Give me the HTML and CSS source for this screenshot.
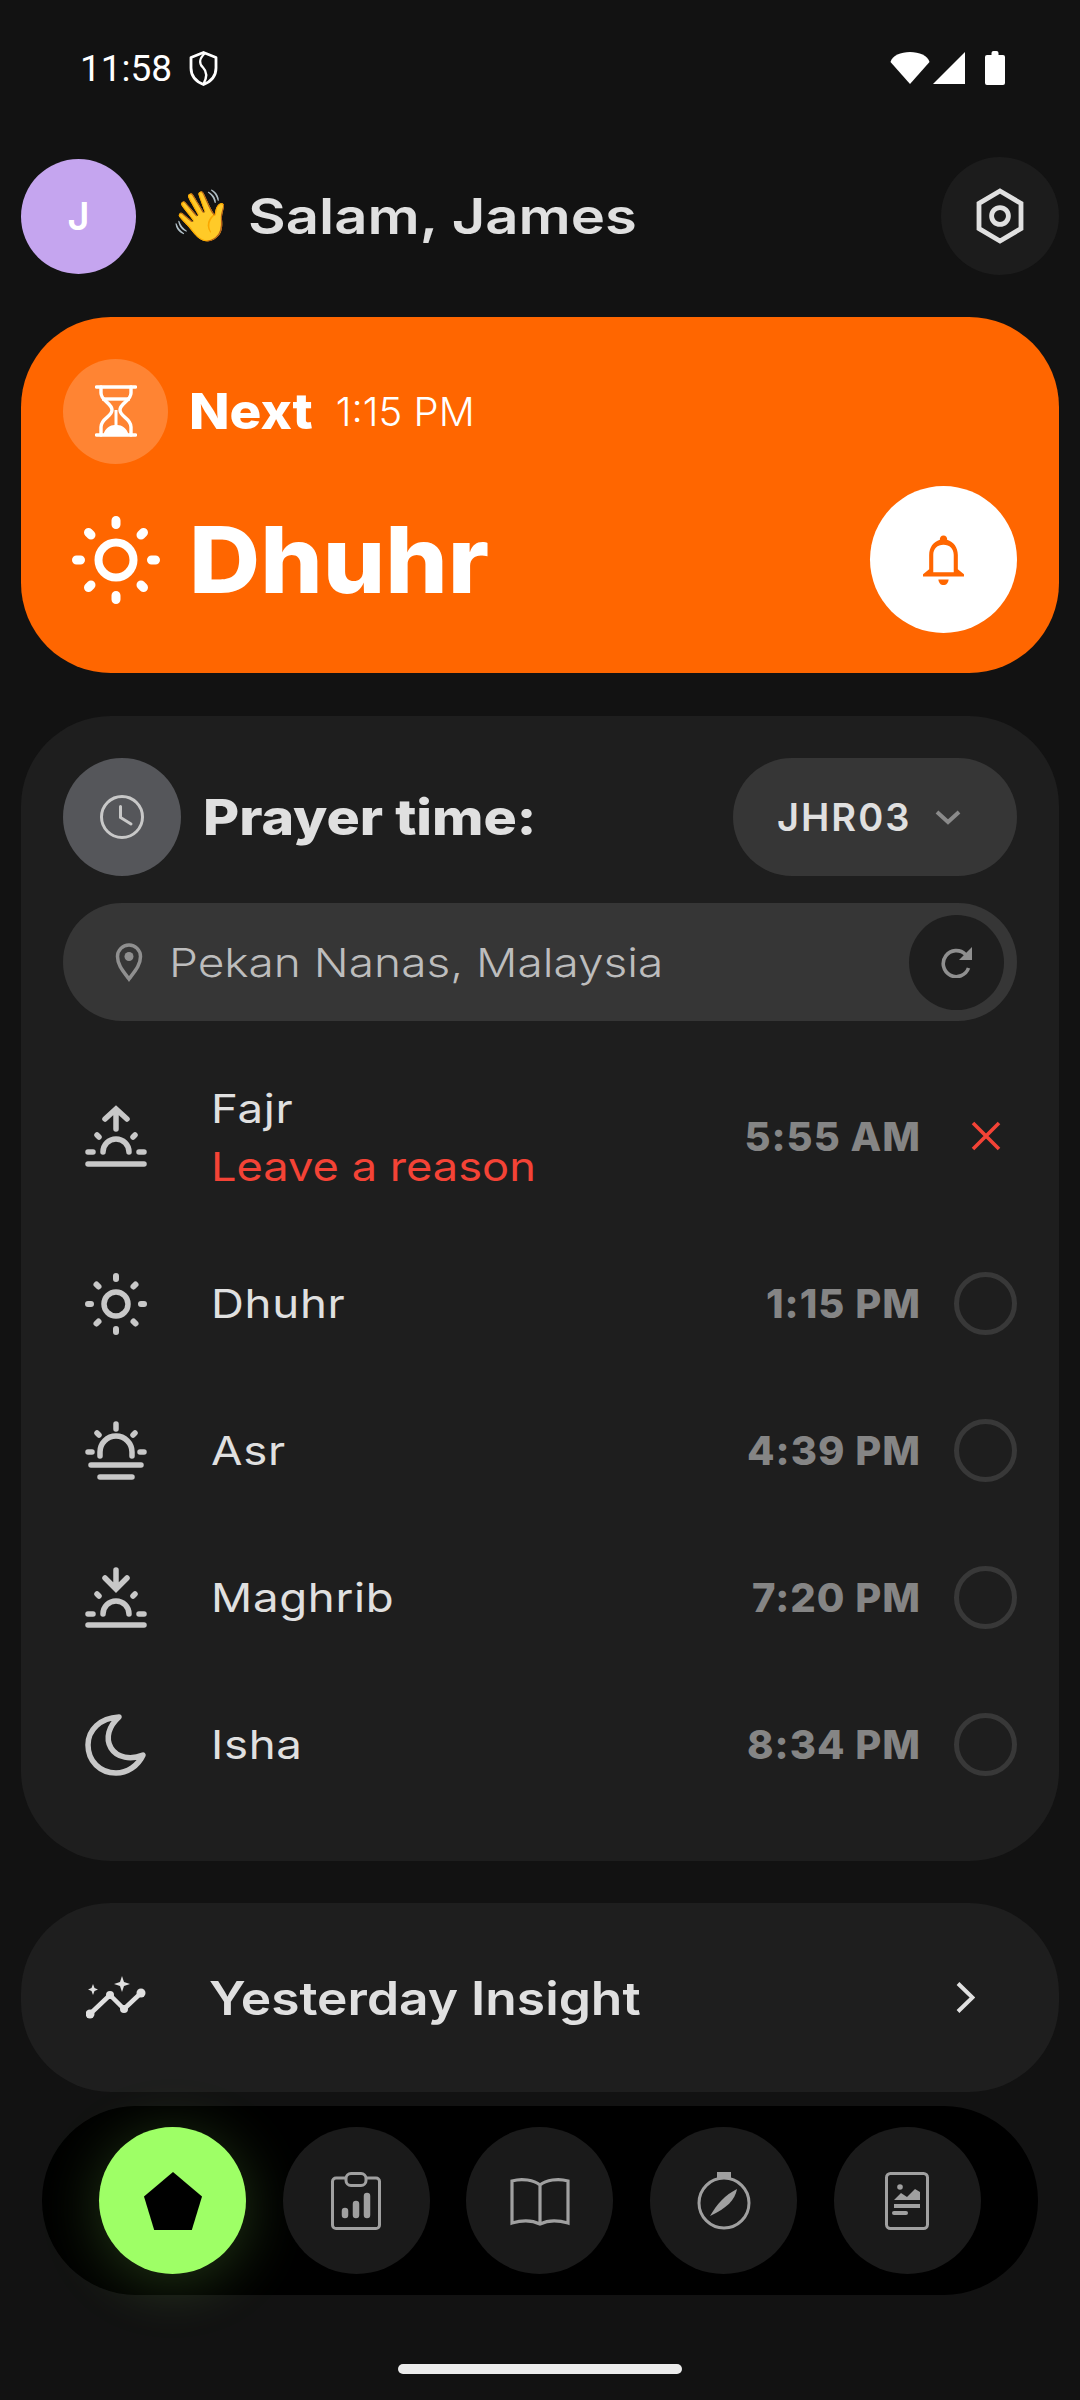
FILE: index.html
```html
<!DOCTYPE html>
<html lang="en">
<head>
<meta charset="utf-8">
<title>Prayer times</title>
<link rel="stylesheet" href="styles.css">
</head>
<body>
<div class="screen">
  <div class="status">
    <div class="status-left">
      <span class="clock">11:58</span>
      <svg class="ic-shield" viewBox="0 0 29 35"><path d="M14.500 1.500 27 6.500V17c0 7.500-5 13.500-12.500 16.500C7 30.500 2 24.500 2 17V6.500Z" fill="none" stroke="#fff" stroke-width="2.800" stroke-linejoin="round"/><path d="M16 2C10 8 9.500 12 14 16.500c4.500 4.500 4 10 .5 16.500" fill="none" stroke="#fff" stroke-width="2.400"/></svg>
    </div>
    <div class="status-right">
      <svg class="ic-wifi" viewBox="0 0 40 32"><path d="M20 32 0.500 10C2 3.500 11 0 20 0s18 3.500 19.500 10Z" fill="#fff"/></svg>
      <svg class="ic-signal" viewBox="0 0 32 32"><path d="M32 0V32H0Z" fill="#fff"/></svg>
      <svg class="ic-batt" viewBox="0 0 20 34"><path d="M6.500 2a2 2 0 0 1 2-2h3a2 2 0 0 1 2 2v2H18a2 2 0 0 1 2 2v26a2 2 0 0 1-2 2H2a2 2 0 0 1-2-2V6a2 2 0 0 1 2-2h4.500Z" fill="#fff"/></svg>
    </div>
  </div>

  <header class="topbar">
    <div class="avatar">J</div>
    <div class="greeting"><span class="wave">👋</span><span class="greet-text">Salam, James</span></div>
    <button class="gear">
      <svg viewBox="0 0 24 28" class="ic-gear"><path d="M12 1.500 22.500 7.700V20.300L12 26.500 1.500 20.300V7.700Z" fill="none" stroke="#e0e0e0" stroke-width="2.400"/><circle cx="12" cy="14" r="4.200" fill="none" stroke="#e0e0e0" stroke-width="2.400"/></svg>
    </button>
  </header>

  <section class="next">
    <div class="next-top">
      <div class="next-badge">
        <svg viewBox="0 0 42 52" class="ic-hour"><g fill="none" stroke="#fff" stroke-width="3.400" stroke-linecap="round"><path d="M1.500 2H40.500M1.500 50H40.500"/><path d="M6 2v6c0 8 11 10 11 17 0 7-11 8-11 17v8M36 2v6c0 8-11 10-11 17 0 7 11 8 11 17v8"/></g><path d="M7 14H35" stroke="#fff" stroke-width="3.400"/><path d="M19.500 25h3v15c4 0 9 3 11 9H8.500c2-6 7-9 11-9Z" fill="#fff"/></svg>
      </div>
      <span class="next-label">Next</span>
      <span class="next-time">1:15 PM</span>
    </div>
    <div class="next-main">
      <svg viewBox="0 0 88 88" class="ic-sun-lg"><g fill="none" stroke="#fff" stroke-linecap="round"><circle cx="44" cy="44" r="17.500" stroke-width="8"/><path stroke-width="9" d="M44 4.500V8.500M44 79.500V83.500M4.500 44H8.500M79.500 44H83.500M16.500 16.500 19 19M69 69 71.500 71.500M16.500 71.500 19 69M69 19 71.500 16.500"/></g></svg>
      <h1 class="next-name">Dhuhr</h1>
      <button class="bell-btn">
        <svg viewBox="0 0 42 50" class="ic-bell"><path d="M21 1a3.500 3.500 0 0 1 3.500 4.200C31 7 35 13 35 20V34l6 5v2H1v-2l6-5V20C7 13 11 7 17.500 5.200A3.500 3.500 0 0 1 21 1Z M21 10c-6 0-10 4-10 10V37H31V20C31 14 27 10 21 10Z" fill="#ff6600" fill-rule="evenodd"/><path d="M16 44H26C25.500 48 23.500 49.500 21 49.500S16.500 48 16 44Z" fill="#ff6600"/></svg>
      </button>
    </div>
  </section>

  <section class="card">
    <div class="card-head">
      <div class="clock-badge">
        <svg viewBox="0 0 44 44" class="ic-clock"><g fill="none" stroke="#c8c8c8" stroke-width="3" stroke-linecap="round"><circle cx="22" cy="22" r="20.500"/><path d="M20.500 11.500V22.500L31 29"/></g></svg>
      </div>
      <h2 class="card-title">Prayer time:</h2>
      <button class="zone">
        <span>JHR03</span>
        <svg viewBox="0 0 26 16" class="ic-chev"><path d="M2 3 13 13 24 3" fill="none" stroke="#8a8a8a" stroke-width="4"/></svg>
      </button>
    </div>
    <div class="loc">
      <svg viewBox="0 0 28 40" class="ic-pin"><path d="M14 37C8 29 2.500 23 2.500 14.500a11.500 11.500 0 0 1 23 0C25.500 23 20 29 14 37Z" fill="none" stroke="#8f8f8f" stroke-width="3.500"/><circle cx="14" cy="14.500" r="4.500" fill="#8f8f8f"/></svg>
      <span class="loc-text">Pekan Nanas, Malaysia</span>
      <button class="refresh">
        <svg viewBox="0 0 32 32" class="ic-refresh"><path d="M27.500 22A13 13 0 1 1 24.500 8.500" fill="none" stroke="#8f8f8f" stroke-width="3.600"/><path d="M31 1V14H18Z" fill="#8f8f8f"/></svg>
      </button>
    </div>
    <ul class="rows">
      <li class="row row-first">
        <svg viewBox="0 0 62 62" class="ic-row"><g fill="none" stroke="#c8c8c8" stroke-linecap="round"><path stroke-width="5.500" d="M31 24V5M20 14 31 4 42 14"/><path stroke-width="5.500" d="M18 47A13 13 0 0 1 44 47"/><path stroke-width="5.500" d="M3 47H8M54 47H59M12 30 14 32M48 32 50 30"/><path stroke-width="5.500" d="M3 59H59"/></g></svg>
        <div class="row-names"><span class="row-name">Fajr</span><span class="reason">Leave a reason</span></div>
        <span class="row-time">5:55 AM</span>
        <svg viewBox="0 0 30 30" class="ic-x"><path d="M2 2 28 28M28 2 2 28" fill="none" stroke="#f44336" stroke-width="3.600"/></svg>
      </li>
      <li class="row">
        <svg viewBox="0 0 62 62" class="ic-row"><g fill="none" stroke="#c8c8c8" stroke-linecap="round"><circle cx="31" cy="31" r="12" stroke-width="5.500"/><path stroke-width="6" d="M31 3V6M31 56V59M3 31H6M56 31H59M11.500 11.500 13.500 13.500M48.500 48.500 50.500 50.500M11.500 50.500 13.500 48.500M48.500 13.500 50.500 11.500"/></g></svg>
        <div class="row-names"><span class="row-name">Dhuhr</span></div>
        <span class="row-time">1:15 PM</span>
        <span class="check"></span>
      </li>
      <li class="row">
        <svg viewBox="0 0 62 62" class="ic-row"><g fill="none" stroke="#c8c8c8" stroke-linecap="round" stroke-width="5.500"><path d="M15 36V32A16 16 0 0 1 47 32V36"/><path d="M31 4V9M3 32H7M55 32H59M12 13 14 15M48 15 50 13"/><path d="M6 45H56M15 57H47"/></g></svg>
        <div class="row-names"><span class="row-name">Asr</span></div>
        <span class="row-time">4:39 PM</span>
        <span class="check"></span>
      </li>
      <li class="row">
        <svg viewBox="0 0 62 62" class="ic-row"><g fill="none" stroke="#c8c8c8" stroke-linecap="round" stroke-width="5.500"><path d="M31 3V21M20 11 31 22 42 11"/><path d="M18 47A13 13 0 0 1 44 47"/><path d="M3 47H8M54 47H59M12 27 14 29M48 29 50 27"/><path d="M3 58H59"/></g></svg>
        <div class="row-names"><span class="row-name">Maghrib</span></div>
        <span class="row-time">7:20 PM</span>
        <span class="check"></span>
      </li>
      <li class="row">
        <svg viewBox="0 0 62 62" class="ic-row"><path d="M34 3C24 12 20 24 26 34 32 44 46 46 58 41 53 52 42 59 31 59 15 59 3 47 3 31 3 16 15 4 34 3Z" fill="none" stroke="#c8c8c8" stroke-width="5.500" stroke-linejoin="round"/></svg>
        <div class="row-names"><span class="row-name">Isha</span></div>
        <span class="row-time">8:34 PM</span>
        <span class="check"></span>
      </li>
    </ul>
  </section>

  <section class="insight">
    <svg viewBox="0 0 60 44" class="ic-insight"><path d="M4 38 24 19 38 33 55 17" fill="none" stroke="#e0e0e0" stroke-width="4.500" stroke-linecap="round" stroke-linejoin="round"/><g fill="#e0e0e0"><circle cx="4" cy="38" r="4.500"/><circle cx="24" cy="19" r="4"/><circle cx="38" cy="33" r="4"/><circle cx="55" cy="17" r="4.500"/><path d="M36 0 38 6 44 8 38 10 36 16 34 10 28 8 34 6Z"/><path d="M7 8 8.500 12 12 13.500 8.500 15 7 19 5.500 15 2 13.500 5.500 12Z"/></g></svg>
    <span class="insight-text">Yesterday Insight</span>
    <svg viewBox="0 0 19 31" class="ic-right"><path d="M2 1.500 16.500 15.500 2 29.500" fill="none" stroke="#e0e0e0" stroke-width="4"/></svg>
  </section>

  <nav class="nav">
    <button class="nav-btn nav-on">
      <svg viewBox="0 0 57 57" class="ic-nav"><path d="M28.500 0 57 24 47 57H10L0 24Z" fill="#000"/></svg>
    </button>
    <button class="nav-btn">
      <svg viewBox="0 0 50 58" class="ic-nav"><g fill="none" stroke="#a0a0a0" stroke-width="3"><path d="M14 6H5a3.500 3.500 0 0 0-3.500 3.500V53A3.500 3.500 0 0 0 5 56.500H45a3.500 3.500 0 0 0 3.500-3.500V9.500A3.500 3.500 0 0 0 45 6H36"/><rect x="15" y="1.500" width="20" height="12" rx="5"/></g><g stroke="#a0a0a0" stroke-width="6.500" stroke-linecap="round"><path d="M14 39V43M25 32V43M36 24V43"/></g></svg>
    </button>
    <button class="nav-btn">
      <svg viewBox="0 0 60 50" class="ic-nav"><path d="M30 9C24 4 12 2 2 5V47C12 44 22 44 30 48 38 44 48 44 58 47V5C48 2 36 4 30 9ZM30 9V48" fill="none" stroke="#a0a0a0" stroke-width="3.200"/></svg>
    </button>
    <button class="nav-btn">
      <svg viewBox="0 0 54 58" class="ic-nav"><circle cx="27" cy="31" r="25" fill="none" stroke="#a0a0a0" stroke-width="3"/><path d="M20 0H34V6H20Z" fill="#a0a0a0"/><path d="M40 17C38 28 30 36 13 44 20 32 28 23 40 17Z" fill="#a0a0a0"/></svg>
    </button>
    <button class="nav-btn">
      <svg viewBox="0 0 44 58" class="ic-nav"><rect x="1.500" y="1.500" width="41" height="55" rx="4" fill="none" stroke="#a0a0a0" stroke-width="3"/><circle cx="15" cy="15" r="2.800" fill="#a0a0a0"/><path d="M9 28 16 21 22 25 30 17 35 20V28Z" fill="#a0a0a0"/><path d="M9 34H35" stroke="#a0a0a0" stroke-width="4"/><path d="M9 41H21" stroke="#a0a0a0" stroke-width="4" stroke-linecap="round"/></svg>
    </button>
  </nav>

  <div class="home-bar"></div>
</div>
</body>
</html>
```
FILE: styles.css
```css
* { box-sizing: border-box; }
html, body { margin: 0; padding: 0; background: #121212; }
body { width: 1080px; height: 2400px; overflow: hidden; font-family: "Inter", "Noto Sans", sans-serif; }
button { border: 0; padding: 0; font: inherit; }
ul { list-style: none; margin: 0; padding: 0; }
h1, h2 { margin: 0; }
svg { display: block; flex: none; }

.screen { width: 1080px; height: 2400px; padding: 0 21px; display: flex; flex-direction: column; }

.status { height: 68px; margin-top: 34px; padding: 0 54px 0 59px; display: flex; align-items: center; justify-content: space-between; }
.status-left { display: flex; align-items: center; gap: 17px; }
.clock { font-family: "Roboto", sans-serif; font-size: 37px; color: #fff; }
.ic-shield { width: 29px; height: 35px; }
.status-right { display: flex; align-items: center; }
.ic-wifi { width: 40px; height: 32px; }
.ic-signal { width: 32px; height: 32px; margin-left: 3px; }
.ic-batt { width: 20px; height: 34px; margin-left: 20px; }

.topbar { height: 118px; margin-top: 55px; display: flex; align-items: center; }
.avatar { width: 115px; height: 115px; border-radius: 50%; background: #c5a5ef; color: #fff; font-size: 38px; font-weight: 600; display: flex; align-items: center; justify-content: center; }
.greeting { margin-left: 34px; flex: 1; display: flex; align-items: center; font-size: 50px; font-weight: 600; color: #e0e0e0; }
.wave { width: 78px; font-size: 50px; line-height: 1; font-family: "Noto Color Emoji", "DejaVu Sans", sans-serif; color: #ffca28; }
.greet-text { display: inline-block; transform: scaleX(1.16); transform-origin: left center; }
.gear { width: 118px; height: 118px; border-radius: 50%; background: #1c1c1c; display: flex; align-items: center; justify-content: center; }
.ic-gear { width: 48px; height: 56px; }

.next { height: 356px; margin-top: 42px; border-radius: 90px; background: #ff6600; padding: 42px 42px 0; display: flex; flex-direction: column; }
.next-top { display: flex; align-items: center; height: 104px; }
.next-badge { width: 105px; height: 105px; border-radius: 50%; background: rgba(255,255,255,.2); display: flex; align-items: center; justify-content: center; }
.ic-hour { width: 42px; height: 52px; }
.next-label { margin-left: 21px; font-size: 50px; font-weight: 800; color: #fff; transform: scaleX(1.06); transform-origin: left center; }
.next-time { margin-left: 30px; font-size: 40px; font-weight: 300; color: #fff; }
.next-main { display: flex; align-items: center; height: 147px; margin-top: 23px; }
.ic-sun-lg { width: 88px; height: 88px; margin-left: 9px; }
.next-name { margin-left: 29px; flex: 1; font-size: 92px; font-weight: 800; color: #fff; line-height: 1; transform: scaleX(1.07); transform-origin: left center; }
.bell-btn { width: 147px; height: 147px; border-radius: 50%; background: #fff; display: flex; align-items: center; justify-content: center; }
.ic-bell { width: 43px; height: 52px; }

.card { height: 1145px; margin-top: 43px; border-radius: 90px; background: #1e1e1e; padding: 42px 42px 0; display: flex; flex-direction: column; }
.card-head { display: flex; align-items: center; height: 118px; }
.clock-badge { width: 118px; height: 118px; border-radius: 50%; background: #55565a; display: flex; align-items: center; justify-content: center; }
.ic-clock { width: 44px; height: 44px; }
.card-title { margin-left: 22px; flex: 1; font-size: 50px; font-weight: 800; color: #e0e0e0; transform: scaleX(1.11); transform-origin: left center; }
.zone { width: 284px; height: 118px; border-radius: 59px; background: #363636; display: flex; align-items: center; gap: 24px; padding-left: 44px; color: #e0e0e0; font-size: 38px; font-weight: 600; letter-spacing: 2px; font-family: "Inter", sans-serif; }
.ic-chev { width: 26px; height: 16px; }
.loc { height: 118px; margin-top: 27px; border-radius: 59px; background: #363636; display: flex; align-items: center; padding: 0 13px 0 52px; }
.ic-pin { width: 28px; height: 40px; }
.loc-text { margin-left: 26px; flex: 1; font-size: 40px; font-weight: 300; color: #bdbdbd; transform: scaleX(1.15); transform-origin: left center; }
.refresh { width: 95px; height: 95px; border-radius: 50%; background: #1e1e1e; display: flex; align-items: center; justify-content: center; }
.ic-refresh { width: 32px; height: 32px; }

.rows { display: flex; flex-direction: column; margin-top: 21px; }
.row { height: 147px; display: flex; align-items: center; }
.row-first { height: 188px; }
.ic-row { width: 62px; height: 62px; margin-left: 22px; }
.row-names { margin-left: 64px; flex: 1; display: flex; flex-direction: column; gap: 4px; padding-top: 3px; }
.row-name { font-size: 40px; line-height: 54px; color: #e0e0e0; font-weight: 400; letter-spacing: .6px; transform: scaleX(1.14); transform-origin: left center; }
.row:not(.row-first) .row-names { padding-top: 0; }
.reason { font-size: 40px; line-height: 54px; color: #f44336; font-weight: 400; transform: scaleX(1.13); transform-origin: left center; }
.row-time { font-size: 40px; font-weight: 800; color: #858585; margin-right: 33px; letter-spacing: 1px; }
.check { width: 63px; height: 63px; border-radius: 50%; border: 5px solid #383838; }
.ic-x { width: 30px; height: 30px; margin: 0 16.5px; }

.insight { height: 189px; margin-top: 42px; border-radius: 90px; background: #1e1e1e; display: flex; align-items: center; padding: 0 84px 0 65px; }
.ic-insight { width: 60px; height: 44px; }
.insight-text { margin-left: 63px; flex: 1; font-size: 46px; font-weight: 600; color: #e0e0e0; transform: scaleX(1.12); transform-origin: left center; }
.ic-right { width: 19px; height: 31px; }

.nav { height: 189px; margin: 14px 21px 0; border-radius: 95px; background: #000; display: flex; align-items: center; gap: 36.7px; padding-left: 57px; }
.nav-btn { width: 147px; height: 147px; border-radius: 50%; background: #1a1a1a; display: flex; align-items: center; justify-content: center; }
.nav-on { background: #9eff66; box-shadow: 0 8px 60px rgba(158,255,102,.22); }
.ic-nav { height: 58px; width: 60px; }
.home-bar { width: 284px; height: 10px; border-radius: 5px; background: #ececec; margin: 69px auto 0; }
```
